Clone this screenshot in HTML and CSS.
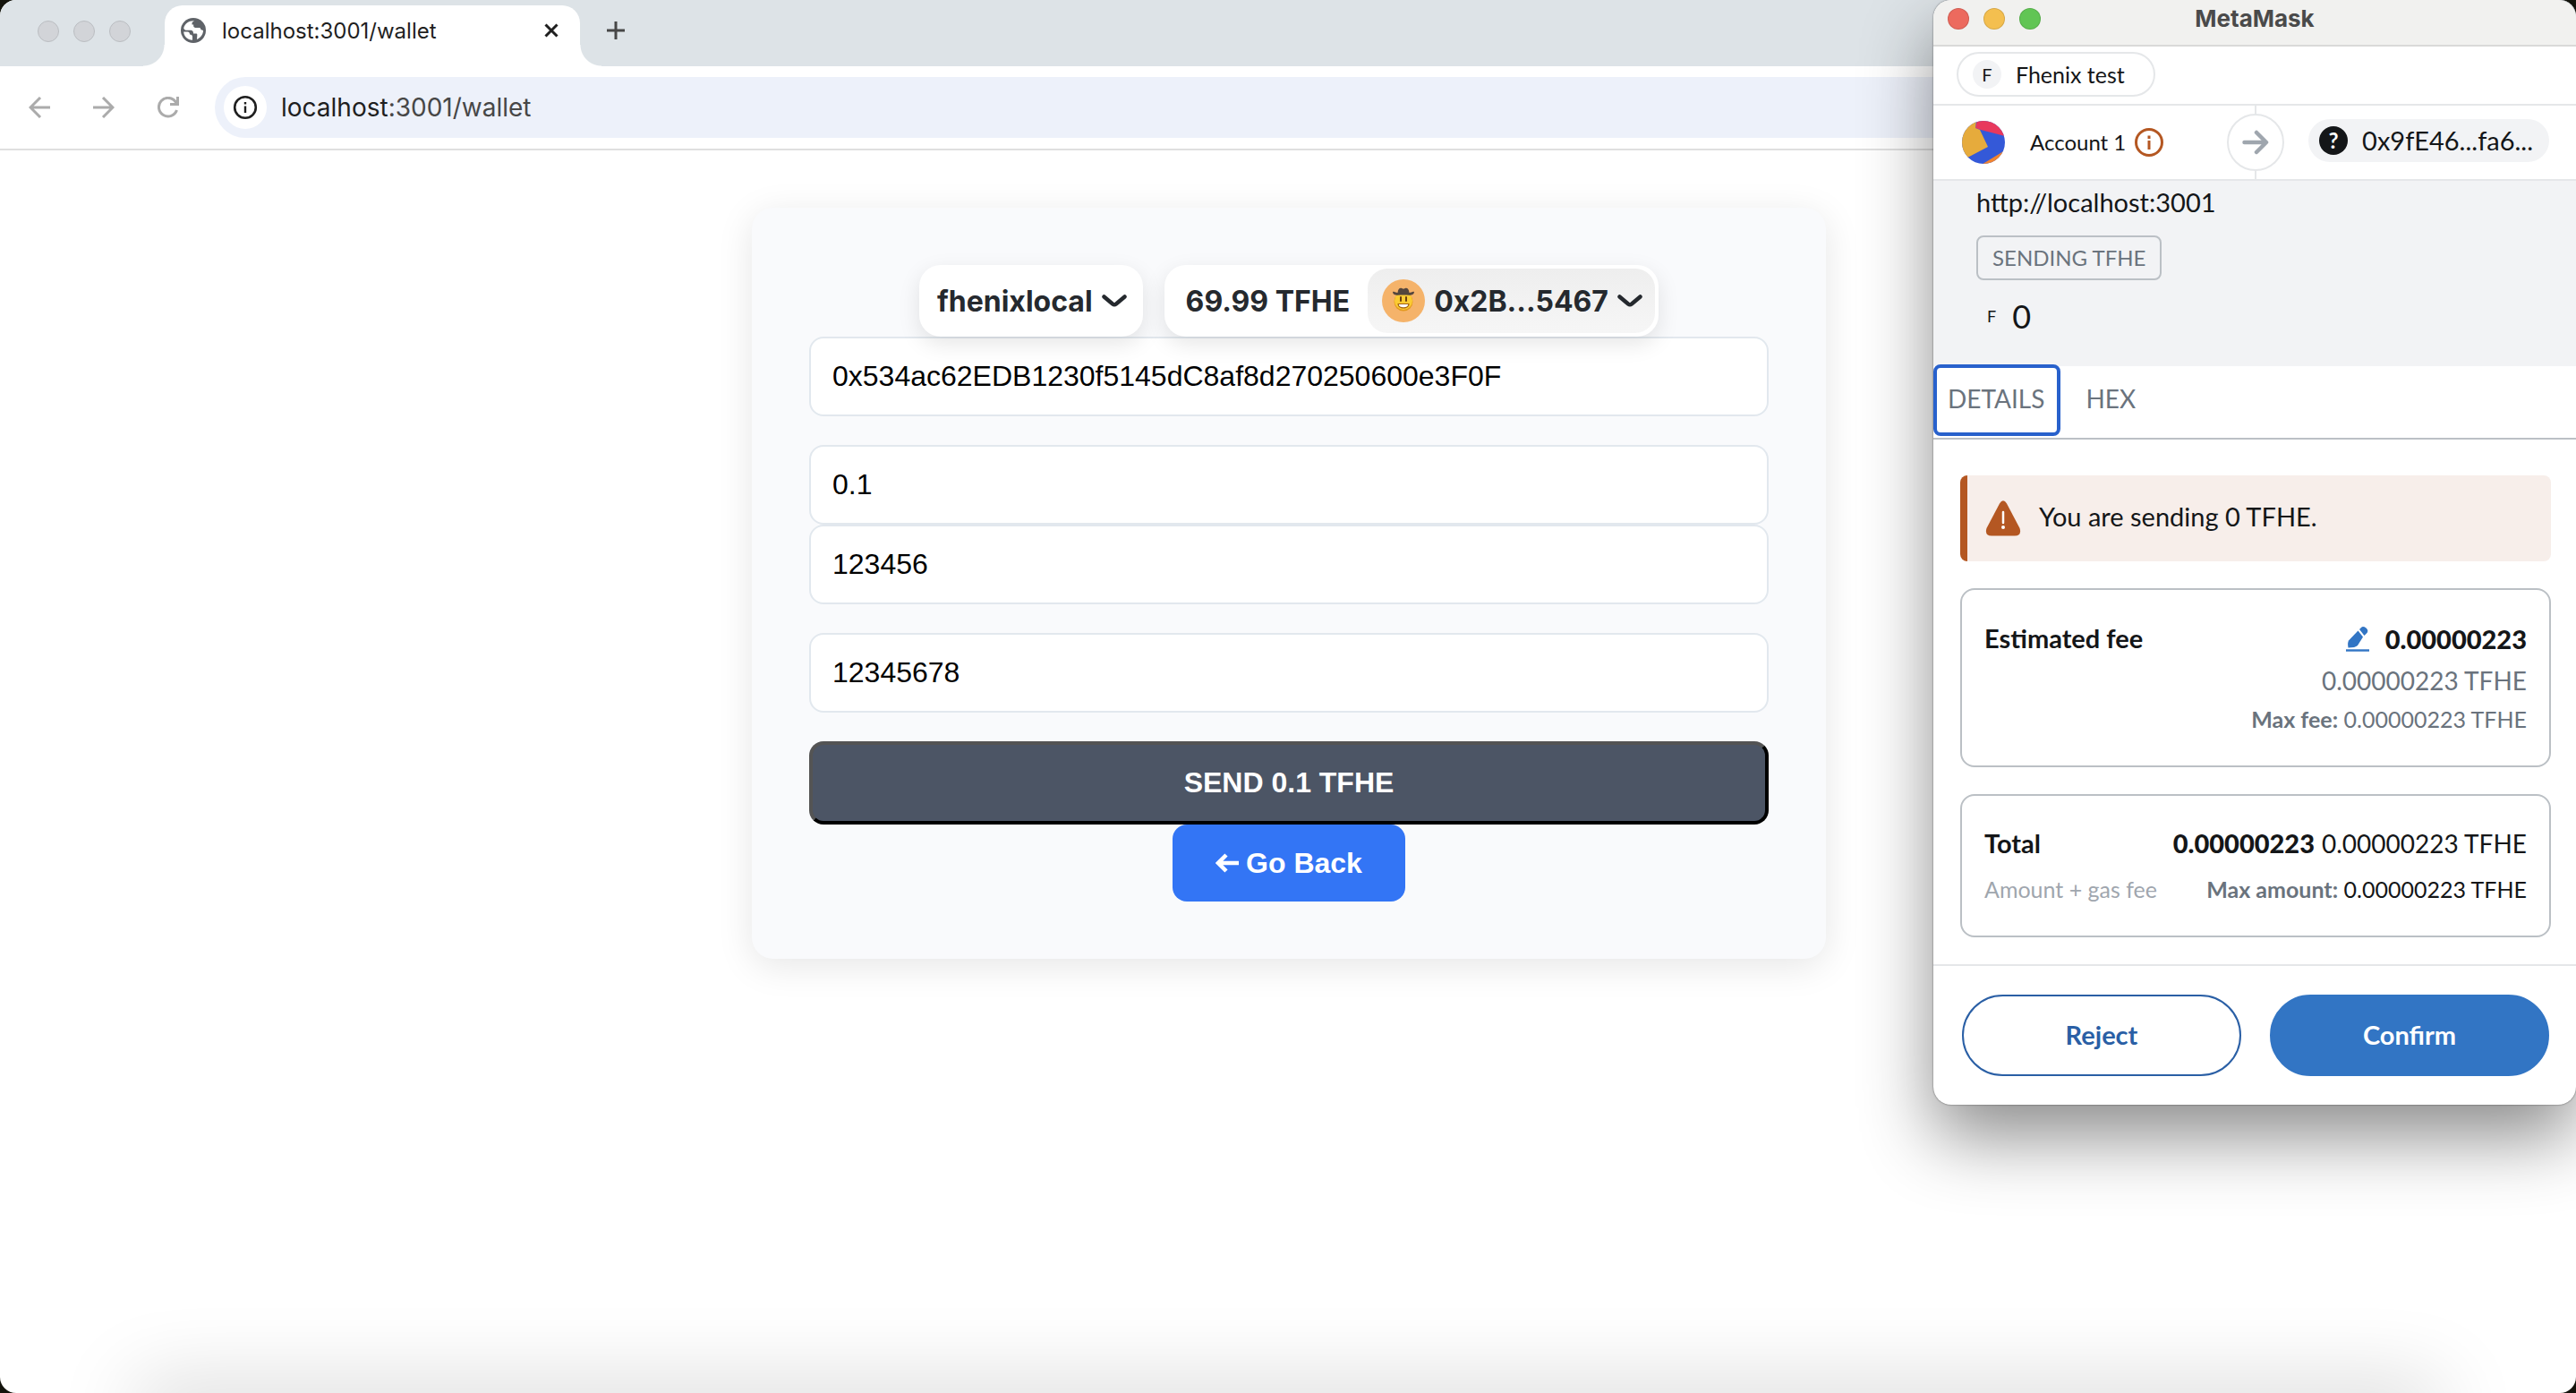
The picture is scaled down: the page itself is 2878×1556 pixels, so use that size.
FILE: index.html
```html
<!DOCTYPE html>
<html lang="en">
<head>
<meta charset="utf-8">
<title>localhost:3001/wallet</title>
<link rel="stylesheet" href="styles.css">
</head>
<body>
<div class="desktop">
  <div class="browser">
    <header class="tabstrip">
      <div class="lights lights-idle"><span></span><span></span><span></span></div>
      <div class="tab">
        <svg class="globe" viewBox="0 0 28 28" aria-hidden="true"><circle cx="14" cy="14" r="14" fill="#5f6368"/><path fill="#fff" d="M15 3.2C9 3 4.200 6.500 3.200 11.500C3.600 13.200 5 13.800 7 13.800H11.500C13.500 14 14 15.500 14 17.500H17C18 17.500 18.500 18 18.300 19.500L18 23.900C22 22.300 25 18.500 25 14C22.500 13.500 22 12.500 21.500 11H17.500C15.500 11 14.200 10.500 14.200 9V7.500H12.500V5.500C13 4.500 14 4 15 3.200Z" transform="translate(0 0)"/><path fill="#fff" d="M3.200 15.500H7.500C9.500 15.600 10 17 10 18.500C12 18.600 13 19.500 13 21.300V24.800C7.500 24.500 3.300 20.500 3.200 15.500Z"/></svg>
        <span class="tab-title">localhost:3001/wallet</span>
        <button class="icon-btn" aria-label="Close tab"><svg width="16" height="16" viewBox="0 0 16 16"><path d="M1.500 1.500L14.500 14.500M14.500 1.500L1.500 14.500" stroke="#1f1f1f" stroke-width="3"/></svg></button>
      </div>
      <button class="icon-btn new-tab" aria-label="New tab"><svg width="20" height="20" viewBox="0 0 20 20"><path d="M10 0V20M0 10H20" stroke="#474747" stroke-width="3"/></svg></button>
    </header>
    <div class="toolbar">
      <nav class="nav-buttons">
        <button class="icon-btn" aria-label="Back"><svg width="24" height="24" viewBox="0 0 24 24"><path d="M24 12H2M13 1L2 12L13 23" fill="none" stroke="#ababab" stroke-width="3"/></svg></button>
        <button class="icon-btn" aria-label="Forward"><svg width="24" height="24" viewBox="0 0 24 24"><path d="M0 12H22M11 1L22 12L11 23" fill="none" stroke="#ababab" stroke-width="3"/></svg></button>
        <button class="icon-btn" aria-label="Reload"><svg width="24" height="24" viewBox="0 0 24 24"><path d="M21.500 15A10.300 10.300 0 1 1 20 5.500L22.500 8.500M22.500 0V8.500H14" fill="none" stroke="#ababab" stroke-width="3"/></svg></button>
      </nav>
      <div class="omnibox">
        <button class="site-info" aria-label="Site information"><svg width="28" height="28" viewBox="0 0 28 28"><circle cx="14" cy="14" r="11.800" fill="none" stroke="#1f1f1f" stroke-width="2.600"/><path d="M14 12.500V20M14 8V10.600" stroke="#1f1f1f" stroke-width="2.400"/></svg></button>
        <span class="url"><span class="url-host">localhost</span>:3001/wallet</span>
      </div>
    </div>
    <main class="page">
      <section class="card">
        <div class="wallet-bar">
          <button class="chip chip-network">fhenixlocal
            <svg class="chevron" viewBox="0 0 28 14"><path d="M2.500 2.500L12 10.500Q14 12 16 10.500L25.500 2.500" fill="none" stroke="#25292e" stroke-width="4.500" stroke-linecap="round"/></svg></button>
          <button class="chip chip-account">
            <span class="balance">69.99 TFHE</span>
            <span class="account">
              <svg width="48" height="48" viewBox="0 0 48 48" aria-hidden="true"><circle cx="24" cy="24" r="24" fill="#f5b36a"/><circle cx="24" cy="25" r="10.500" fill="#e39a1d"/><circle cx="24" cy="24" r="10" fill="#fbcb33"/><path d="M17.500 27H30.500C30.500 31 27.500 32.500 24 32.500S17.500 31 17.500 27Z" fill="#a5630e"/><path d="M18.800 28H29.200C29 30.500 27 31.200 24 31.200S19 30.500 18.800 28Z" fill="#fff"/><path d="M21 20V24M27 20V24" stroke="#6b3f10" stroke-width="2" stroke-linecap="round"/><path d="M12 14C12.500 19 18 17.500 24 17.500S35.500 19 36 14C34.500 13 32.500 15 30.500 15C30 11 28.500 9.500 26.500 9.800L24 10.800L21.500 9.800C19.500 9.500 18 11 17.500 15C15.500 15 13.500 13 12 14Z" fill="#54463d"/></svg>
              <span>0x2B...5467</span>
              <svg class="chevron" viewBox="0 0 28 14"><path d="M2.500 2.500L12 10.500Q14 12 16 10.500L25.500 2.500" fill="none" stroke="#25292e" stroke-width="4.500" stroke-linecap="round"/></svg>
            </span>
          </button>
        </div>
        <form class="send-form">
          <div class="fields">
            <input class="field" aria-label="Recipient" value="0x534ac62EDB1230f5145dC8af8d270250600e3F0F">
            <input class="field" aria-label="Amount" value="0.1">
          </div>
          <div class="fields">
            <input class="field" aria-label="Gas price" value="123456">
            <input class="field" aria-label="Gas limit" value="12345678">
            <button type="button" class="send">SEND 0.1 TFHE</button>
          </div>
        </form>
        <a class="back" href="#">
          <svg width="26" height="22" viewBox="0 0 26 22" aria-hidden="true"><path d="M26 11H4M12 2L3 11L12 20" fill="none" stroke="#fff" stroke-width="4.500"/></svg>Go Back</a>
      </section>
    </main>
    <div class="dock-shadow"></div>
  </div>

  <section class="popup">
    <header class="titlebar">
      <div class="lights"><span class="red"></span><span class="yellow"></span><span class="green"></span></div>
      <h1 class="title">MetaMask</h1>
    </header>
    <div class="network-row">
      <div class="network"><span class="avatar">F</span>Fhenix test</div>
    </div>
    <div class="parties">
      <div class="sender">
        <svg class="jazz" width="48" height="48" viewBox="0 0 48 48" aria-hidden="true"><defs><clipPath id="disc"><circle cx="24" cy="24" r="24"/></clipPath></defs><g clip-path="url(#disc)"><path d="M0 0H48V48H0Z" fill="#3459d8"/><path d="M17 -1H48V17L21 10L15 8Z" fill="#e8385d"/><path d="M0 0H16L15 8L20 10L29 29L10 39L0 44Z" fill="#e6ab3c"/><path d="M48 33L20 50H48Z" fill="#f18430"/></g></svg>
        <span>Account 1</span>
        <svg class="warn-info" width="32" height="32" viewBox="0 0 32 32"><circle cx="16" cy="16" r="14.500" fill="none" stroke="#b45722" stroke-width="3"/><path d="M16 14V24M16 8.500V12" stroke="#b45722" stroke-width="3"/></svg>
      </div>
      <div class="direction"><span class="direction-disc"><svg width="30" height="28" viewBox="0 0 30 28"><path d="M2.500 14H26M16 3L27 14L16 25" fill="none" stroke="#9fa6ae" stroke-width="4.500" stroke-linecap="round" stroke-linejoin="round"/></svg></span></div>
      <div class="recipient"><span class="recipient-pill"><span class="unknown">?</span>0x9fE46...fa6...</span></div>
    </div>
    <div class="summary">
      <p class="origin">http://localhost:3001</p>
      <span class="badge">SENDING TFHE</span>
      <p class="amount"><span class="amount-token">F</span>0</p>
    </div>
    <div class="tabs" role="tablist">
      <button class="tab-btn tab-active" role="tab">DETAILS</button>
      <button class="tab-btn" role="tab">HEX</button>
    </div>
    <div class="details">
      <div class="alert">
        <svg width="40" height="40" viewBox="0 0 40 40" aria-hidden="true"><path d="M16 3.500Q20 -3 24 3.500L38.500 31Q41 39 33 39.500H7Q-1 39 1.500 31Z" fill="#b45722"/><path d="M20 13V25" stroke="#fff" stroke-width="2.500" stroke-linecap="round"/><circle cx="20" cy="30" r="2" fill="#fff"/></svg>
        <p class="alert-text">You are sending 0 TFHE.</p>
      </div>
      <div class="box box-fee">
        <h2 class="label">Estimated fee</h2>
        <div class="fee-values">
          <p class="value"><button class="icon-btn" aria-label="Edit fee"><svg width="26" height="28" viewBox="0 0 26 28"><path d="M13.500 4.500L19 11.500L13 21Q10.500 23.500 2.500 23.500Q1.500 18 3 15.500Z" fill="#3275c4"/><path d="M15 3L20.500 10L23.500 7Q25.500 4 22.500 1.500Q19 -1 17 1Z" fill="#3275c4"/><path d="M0 26.500H26" stroke="#3275c4" stroke-width="2.400"/></svg></button><strong class="heavy">0.00000223</strong></p>
          <p class="value muted">0.00000223 TFHE</p>
          <p class="small muted"><strong>Max fee:</strong> 0.00000223 TFHE</p>
        </div>
      </div>
      <div class="box box-total">
        <div class="line"><h2 class="label">Total</h2><p class="value"><strong class="heavy">0.00000223</strong> 0.00000223 TFHE</p></div>
        <div class="line small"><span class="faint">Amount + gas fee</span><p><strong class="muted">Max amount:</strong> 0.00000223 TFHE</p></div>
      </div>
    </div>
    <footer class="actions">
      <button class="action reject">Reject</button>
      <button class="action confirm">Confirm</button>
    </footer>
  </section>
</div>
</body>
</html>
```
FILE: styles.css
```css
* { box-sizing: border-box; }
body, h1, h2, p { margin: 0; }
body { background: #14140c; }
button { font: inherit; color: inherit; border: 0; padding: 0; background: none; }
svg { display: block; flex: none; }

.desktop { position: relative; min-height: 100vh; display: flex; }
.icon-btn { display: flex; }

/* Browser window */
.browser {
  position: relative;
  flex: 1;
  display: flex;
  flex-direction: column;
  overflow: hidden;
  background: #fff;
  border-radius: 18px;
  font-family: Inter, "Liberation Sans", sans-serif;
}
.tabstrip {
  display: flex;
  align-items: flex-end;
  height: 74px;
  padding-left: 42px;
  background: #dde3e7;
}
.lights { display: flex; gap: 16px; }
.lights span { width: 24px; height: 24px; border-radius: 50%; border: 1px solid rgba(0, 0, 0, .12); }
.lights-idle { align-self: flex-start; margin: 23px 38px 0 0; }
.lights-idle span { background: #d2d4d8; border-color: #bbbec2; }
.tab {
  position: relative;
  display: flex;
  align-items: center;
  gap: 18px;
  width: 464px;
  height: 68px;
  padding: 0 24px 12px 18px;
  background: #fff;
  border-radius: 20px 20px 0 0;
}
.tab::before, .tab::after {
  content: "";
  position: absolute;
  bottom: 0;
  width: 24px;
  height: 24px;
}
.tab::before { right: 100%; background: radial-gradient(circle at 0 0, #dde3e7 23px, #fff 24px); }
.tab::after { left: 100%; background: radial-gradient(circle at 100% 0, #dde3e7 23px, #fff 24px); }
.globe { width: 28px; height: 28px; }
.tab-title { flex: 1; font-size: 24px; color: #1f1f1f; }
.new-tab { margin: 0 0 30px 30px; }
.toolbar {
  display: flex;
  align-items: center;
  gap: 40px;
  height: 94px;
  padding-left: 32px;
  border-bottom: 2px solid #dfdfdf;
  background: #fff;
}
.nav-buttons { display: flex; gap: 48px; }
.omnibox {
  flex: 1;
  display: flex;
  align-items: center;
  gap: 16px;
  height: 68px;
  padding-left: 10px;
  border-radius: 34px;
  background: #edf1fa;
}
.site-info {
  display: flex;
  align-items: center;
  justify-content: center;
  width: 48px;
  height: 48px;
  border-radius: 50%;
  background: #fff;
}
.url { font-size: 28px; color: #474747; }
.url-host { color: #1f1f1f; }

/* Wallet page */
.page { display: flex; justify-content: center; padding: 64px 32px 64px 34px; }
.card {
  display: flex;
  flex-direction: column;
  align-items: center;
  width: 100%;
  max-width: 1200px;
  padding: 64px;
  border-radius: 24px;
  background: #f9fafc;
  box-shadow: 0 8px 40px rgba(0, 0, 0, .1);
}
.wallet-bar { position: relative; z-index: 1; display: flex; gap: 24px; }
.chip {
  display: flex;
  align-items: center;
  height: 80px;
  border-radius: 24px;
  background: #fff;
  box-shadow: 0 8px 24px rgba(0, 0, 0, .1);
  color: #25292e;
  font-size: 32px;
  font-weight: 700;
}
.chip-network { gap: 10px; padding: 0 18px 0 20px; }
.chip-account { padding: 4px; }
.balance { padding: 0 20px; }
.account {
  display: flex;
  align-items: center;
  gap: 10px;
  height: 72px;
  padding: 0 14px 0 16px;
  border-radius: 22px;
  background: linear-gradient(#eee, #f6f6f6);
}
.chevron { width: 28px; height: 14px; }
.send-form { align-self: stretch; }
.fields { display: flex; flex-direction: column; gap: 32px; }
.field {
  width: 100%;
  height: 89px;
  padding: 0 24px;
  border: 2px solid #e2e8ee;
  border-radius: 16px;
  background: #fff;
  color: #000;
  font: 32px "Liberation Sans", Arial, sans-serif;
}
.send {
  height: 93px;
  border: 4px outset #000;
  border-radius: 16px;
  background: #4c5565;
  color: #fff;
  font: bold 32px "Liberation Sans", Arial, sans-serif;
}
.back {
  display: flex;
  align-items: center;
  gap: 8px;
  height: 86px;
  padding: 0 48px;
  border-radius: 16px;
  background: #3375f5;
  color: #fff;
  font: bold 32px "Liberation Sans", Arial, sans-serif;
  text-decoration: none;
}
.dock-shadow {
  position: absolute;
  left: 160px;
  right: 160px;
  top: 100%;
  height: 40px;
  box-shadow: 0 0 90px 8px rgba(0, 0, 0, .18);
}

/* Extension window */
.popup {
  position: absolute;
  top: 0;
  right: 0;
  width: 718px;
  overflow: hidden;
  border-radius: 20px;
  background: #fff;
  color: #141618;
  box-shadow: 0 0 2px rgba(0, 0, 0, .6), 0 36px 80px rgba(0, 0, 0, .45);
  font: 28px/40px Lato, sans-serif;
}
.titlebar {
  display: grid;
  grid-template-columns: 1fr auto 1fr;
  align-items: center;
  height: 52px;
  padding: 0 16px 8px;
  border-bottom: 2px solid #d9d9d8;
  background: #f1f1ef;
}
.red { background: #ec6a5e; }
.yellow { background: #f4bf4f; }
.green { background: #61c554; }
.title { color: #4a4a4a; font: 700 26px/32px Inter, sans-serif; }
.network-row { padding: 6px 26px 8px; border-bottom: 2px solid #e5e7e9; }
.network {
  display: inline-flex;
  align-items: center;
  gap: 16px;
  height: 50px;
  padding: 0 32px 0 16px;
  border: 2px solid #e5e7e9;
  border-radius: 25px;
  font-size: 25px;
  vertical-align: top;
}
.avatar {
  width: 32px;
  border-radius: 50%;
  background: #f2f3f5;
  font-size: 20px;
  line-height: 32px;
  text-align: center;
}
.parties { display: grid; grid-template-columns: 328px 64px 1fr; height: 84px; border-bottom: 2px solid #e5e7e9; }
.sender { display: flex; align-items: center; padding-left: 32px; font-size: 24px; }
.jazz { margin-right: 28px; }
.warn-info { margin-left: 10px; }
.direction {
  display: flex;
  align-items: center;
  background: linear-gradient(#e5e7e9, #e5e7e9) center / 2px 100% no-repeat;
}
.direction-disc {
  display: flex;
  align-items: center;
  justify-content: center;
  width: 64px;
  height: 64px;
  border: 2px solid #e5e7e9;
  border-radius: 50%;
  background: #fff;
}
.recipient { display: flex; align-items: center; justify-content: flex-end; padding: 0 30px 4px 0; font-size: 29px; }
.recipient-pill {
  display: flex;
  align-items: center;
  gap: 16px;
  height: 48px;
  padding: 0 18px 0 12px;
  border-radius: 24px;
  background: #f2f3f5;
}
.unknown {
  width: 32px;
  border-radius: 50%;
  background: #141618;
  color: #fff;
  font-size: 24px;
  font-weight: 700;
  line-height: 32px;
  text-align: center;
}
.summary { height: 207px; padding: 4px 48px; background: #f2f3f5; }
.origin { font-size: 29px; }
.badge {
  display: inline-block;
  margin-top: 17px;
  padding: 0 16px;
  border: 2px solid #bbc0c5;
  border-radius: 8px;
  color: #6a737d;
  font-size: 24px;
  line-height: 46px;
  vertical-align: top;
}
.amount { display: flex; align-items: center; gap: 18px; margin-top: 18px; padding-left: 12px; font-size: 36px; line-height: 44px; }
.amount-token { font-size: 18px; }
.tabs { display: flex; height: 82px; border-bottom: 2px solid #bbc0c5; }
.tab-btn { padding: 0 28px 8px; color: #6a737d; }
.tab-active { position: relative; padding: 0 18px 8px 16px; }
.tab-active::after {
  content: "";
  position: absolute;
  inset: -2px 0 2px;
  border: 4px solid #2861cc;
  border-radius: 8px;
}
.details { display: flex; flex-direction: column; gap: 30px; padding: 40px 28px 30px 30px; }
.alert {
  display: flex;
  align-items: center;
  gap: 20px;
  height: 96px;
  padding-left: 20px;
  border-left: 8px solid #b45722;
  border-radius: 8px;
  background: #f7eeea;
}
.alert-text { padding-bottom: 4px; font-size: 29px; }
.box { padding: 32px 25px; border: 2px solid #bbc0c5; border-radius: 16px; }
.box-fee { display: flex; justify-content: space-between; height: 200px; }
.box-total { display: flex; flex-direction: column; gap: 8px; height: 160px; padding-top: 30px; }
.fee-values { display: flex; flex-direction: column; align-items: flex-end; }
.label { font-size: 29px; font-weight: 700; line-height: 44px; }
.value { display: flex; align-items: center; gap: 8px; line-height: 46px; }
.fee-values .icon-btn { margin-right: 10px; }
.heavy { font-size: 29px; font-weight: 900; }
.line { display: flex; justify-content: space-between; align-items: center; }
.small { font-size: 25px; line-height: 40px; }
.muted { color: #6a737d; }
.faint { color: #9fa6ae; }
.actions { display: grid; grid-template-columns: 1fr 1fr; gap: 32px; padding: 32px 30px 32px 32px; border-top: 2px solid #e5e7e9; }
.action { height: 91px; padding-bottom: 2px; border: 2px solid #2a5fa5; border-radius: 46px; font-size: 29px; font-weight: 700; }
.reject { color: #2a5fa5; }
.confirm { border-color: #3275c4; background: #3275c4; color: #fff; }
```
